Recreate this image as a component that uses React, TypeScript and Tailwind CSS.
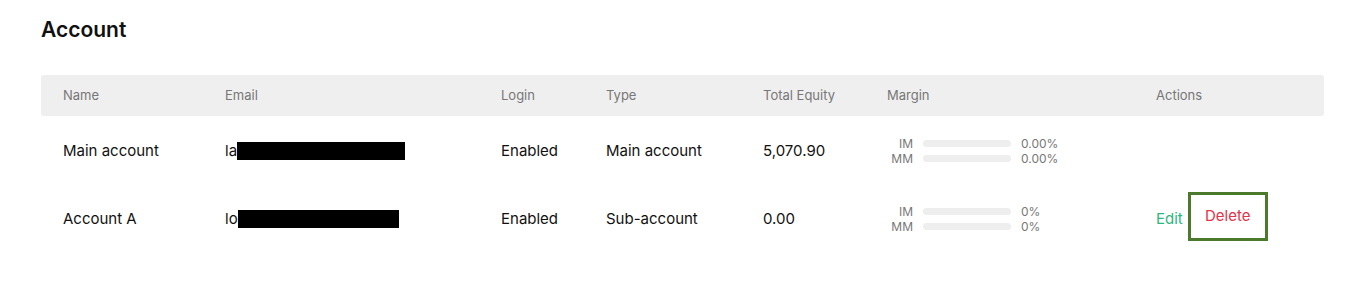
import React from "react";

type Account = {
  name: string;
  prefix: string;
  maskWidth: number;
  login: string;
  type: string;
  equity: string;
  im: string;
  mm: string;
  height: string;
  actions: boolean;
};

const accounts: Account[] = [
  {
    name: "Main account",
    prefix: "la",
    maskWidth: 168,
    login: "Enabled",
    type: "Main account",
    equity: "5,070.90",
    im: "0.00%",
    mm: "0.00%",
    height: "h-[70px]",
    actions: false,
  },
  {
    name: "Account A",
    prefix: "lo",
    maskWidth: 161,
    login: "Enabled",
    type: "Sub-account",
    equity: "0.00",
    im: "0%",
    mm: "0%",
    height: "h-[66px]",
    actions: true,
  },
];

const MarginLine = ({ label, value }: { label: string; value: string }) => (
  <div className="flex items-center h-[15px] text-[12px] text-[#777]">
    <span className="w-[26px] text-right">{label}</span>
    <div className="ml-[10px] w-[88px] h-[7px] rounded-full bg-[#eeeeee]" />
    <span className="ml-[10px]">{value}</span>
  </div>
);

export default function App() {
  return (
    <div
      className="w-[1362px] h-[286px] bg-white px-[41px] pt-[18px]"
      style={{ fontFamily: "Inter, 'Noto Sans', sans-serif" }}
    >
      <h1 className="text-[21px] font-semibold text-[#111] leading-[24px]">
        Account
      </h1>

      <div className="mt-[33px] w-[1283px]">
        <div className="flex items-center h-[41px] bg-[#efefef] rounded-[3px] text-[13px] text-[#777]">
          <div className="w-[184px] pl-[22px]">Name</div>
          <div className="w-[276px]">Email</div>
          <div className="w-[105px]">Login</div>
          <div className="w-[157px]">Type</div>
          <div className="w-[124px]">Total Equity</div>
          <div className="w-[269px]">Margin</div>
          <div className="flex-1">Actions</div>
        </div>

        {accounts.map((a) => (
          <div
            key={a.name}
            className={`flex items-center ${a.height} text-[15px] text-[#111]`}
          >
            <div className="w-[184px] pl-[22px]">{a.name}</div>
            <div className="w-[276px] flex items-center">
              <span>{a.prefix}</span>
              <span
                className="h-[18px] bg-black"
                style={{ width: a.maskWidth }}
              />
            </div>
            <div className="w-[105px]">{a.login}</div>
            <div className="w-[157px]">{a.type}</div>
            <div className="w-[124px]">{a.equity}</div>
            <div className="w-[269px]">
              <MarginLine label="IM" value={a.im} />
              <MarginLine label="MM" value={a.mm} />
            </div>
            <div className="flex-1 flex items-center">
              {a.actions && (
                <>
                  <span className="text-[#2bb77e]">Edit</span>
                  <span className="ml-[5px] mb-[5px] w-[80px] h-[49px] border-[3px] border-[#4b7a2c] flex items-center justify-center text-[#e2334b]">
                    Delete
                  </span>
                </>
              )}
            </div>
          </div>
        ))}
      </div>
    </div>
  );
}
